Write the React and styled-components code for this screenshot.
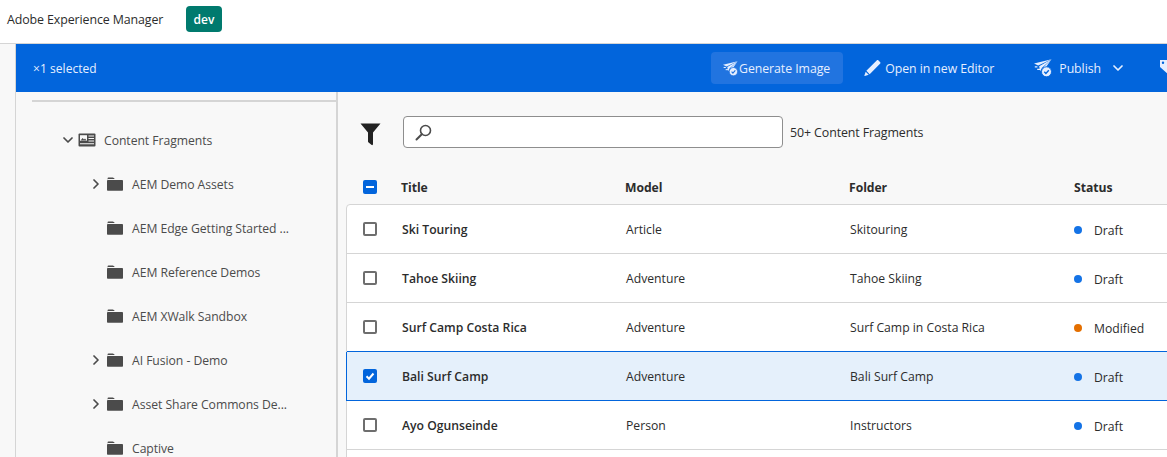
import React from 'react';
import styled, { createGlobalStyle } from 'styled-components';

const Global = createGlobalStyle`
  html, body { margin: 0; padding: 0; height: 100%; overflow: hidden; background: #f8f8f8; }
  body { font-family: "Open Sans", "Noto Sans", sans-serif; font-size: 12px; color: #2c2c2c; }
  #root { height: 100%; }
`;

const Page = styled.div`
  width: 1167px;
  height: 457px;
  overflow: hidden;
  display: flex;
  flex-direction: column;
`;

const TopBar = styled.header`
  flex: 0 0 44px;
  box-sizing: border-box;
  background: #fff;
  border-bottom: 1px solid #d5d5d5;
  display: flex;
  align-items: center;
  padding: 0 0 5px 7px;
`;

const Brand = styled.div`
  width: 179px;
  font-size: 12.4px;
  color: #2c2c2c;
  letter-spacing: -0.1px;
`;

const EnvBadge = styled.div`
  width: 36px;
  height: 26px;
  border-radius: 4px;
  background: #007a6e;
  color: #fff;
  font-size: 12px;
  font-weight: 600;
  display: flex;
  align-items: center;
  justify-content: center;
`;

const Shell = styled.div`
  flex: 1;
  min-height: 0;
  display: flex;
`;

const Rail = styled.div`
  flex: 0 0 16px;
  box-sizing: border-box;
  border-right: 1px solid #d5d5d5;
`;

const Workspace = styled.div`
  flex: 1;
  min-width: 0;
  display: flex;
  flex-direction: column;
`;

const ActionBar = styled.div`
  flex: 0 0 48px;
  background: #0265dc;
  color: #e6efff;
  display: flex;
  align-items: center;
  white-space: nowrap;
  overflow: hidden;
`;

const Selection = styled.div`
  width: 695px;
  flex: none;
  padding-left: 17px;
  box-sizing: border-box;
  font-size: 12px;
  letter-spacing: 0.05px;
`;

const Action = styled.div`
  flex: none;
  height: 32px;
  box-sizing: border-box;
  display: flex;
  align-items: center;
  gap: ${p => p.$gap || 4}px;
  border-radius: 4px;
  font-size: 12.3px;
  letter-spacing: -0.05px;
  margin-right: ${p => p.$after || 0}px;
  padding: 0 ${p => (p.$active ? 13 : 0)}px 0 ${p => (p.$active ? 12 : 0)}px;
  background: ${p => (p.$active ? '#2174e0' : 'transparent')};
`;

const Caret = styled.span`
  display: flex;
  margin-left: 5px;
`;

const Columns = styled.div`
  flex: 1;
  min-height: 0;
  display: flex;
`;

const Sidebar = styled.aside`
  flex: 0 0 322px;
  box-sizing: border-box;
  border-right: 2px solid #d5d5d5;
  padding: 8px 0 0 16px;
  overflow: hidden;
`;

const SideRule = styled.div`
  height: 2px;
  background: #d5d5d5;
  margin-bottom: 16px;
`;

const TreeRow = styled.div`
  height: 44px;
  display: flex;
  align-items: center;
  padding-left: ${p => (p.$root ? 29 : 57)}px;
  color: #4b4b4b;
  font-size: 12.2px;
  letter-spacing: -0.05px;
  white-space: nowrap;
`;

const Twisty = styled.div`
  flex: 0 0 13px;
  margin-right: ${p => (p.$root ? 4 : 5)}px;
  display: flex;
  align-items: center;
  justify-content: center;
`;

const NodeLabel = styled.span`
  margin-left: ${p => (p.$root ? 8 : 9)}px;
`;

const Main = styled.main`
  flex: 1;
  min-width: 0;
  padding: 24px 0 0 8px;
  overflow: hidden;
`;

const SearchRow = styled.div`
  display: flex;
  align-items: center;
  height: 32px;
  padding-left: 14px;
`;

const FilterSlot = styled.div`
  flex: 0 0 43px;
  display: flex;
  padding-top: 4px;
`;

const SearchBox = styled.div`
  width: 380px;
  height: 32px;
  box-sizing: border-box;
  background: #fff;
  border: 1px solid #8e8e8e;
  border-radius: 4px;
  display: flex;
  align-items: center;
  padding-left: 11px;
`;

const Count = styled.div`
  margin-left: 7px;
  font-size: 12.4px;
  letter-spacing: -0.1px;
  color: #2c2c2c;
`;

const Grid = styled.div`
  display: grid;
  grid-template-columns: 55px 224px 224px 225px 224px;
  align-items: center;
`;

const HeadRow = styled(Grid)`
  margin-top: 22px;
  height: 34px;
  font-weight: 700;
  font-size: 12.2px;
  letter-spacing: -0.05px;
  color: #2c2c2c;
  box-sizing: border-box;
`;

const Table = styled.div`
  width: 900px;
  height: 300px;
  background: #fff;
  border: 1px solid #d5d5d5;
  border-radius: 4px 0 0 0;
`;

const Row = styled(Grid)`
  height: 49px;
  box-sizing: border-box;
  border-bottom: 1px solid ${p => (p.$selected ? '#0265dc' : '#d5d5d5')};
  background: ${p => (p.$selected ? '#e5f0fb' : 'transparent')};
  box-shadow: ${p => (p.$selected ? '0 -1px 0 #0265dc, -1px 0 0 #0265dc' : 'none')};
  font-size: 12.2px;
  color: #2c2c2c;
`;

const TitleCell = styled.div`
  font-weight: 600;
`;

const Cell = styled.div``;

const BoxCell = styled.div`
  padding-left: ${p => (p.$head ? 17 : 16)}px;
  display: flex;
`;

const Check = styled.div`
  width: 14px;
  height: 14px;
  box-sizing: border-box;
  border-radius: 2px;
  border: ${p => (p.$on ? 'none' : '2px solid #6e6e6e')};
  background: ${p => (p.$on ? '#0265dc' : '#fff')};
  display: flex;
  align-items: center;
  justify-content: center;
`;

const StatusCell = styled.div`
  display: flex;
  align-items: center;
  padding-top: 2px;
  margin-left: -1px;
`;

const Dot = styled.span`
  width: 8px;
  height: 8px;
  border-radius: 50%;
  background: ${p => (p.$modified ? '#e46f00' : '#1473e6')};
  margin-right: 12px;
`;

const Chevron = ({ open, color = '#4b4b4b' }) => (
  <svg width="10" height="10" viewBox="0 0 10 10" fill="none" stroke={color} strokeWidth="1.7" strokeLinecap="round" strokeLinejoin="round">
    {open ? <path d="M1 3l4 4 4-4" /> : <path d="M3 1l4 4-4 4" />}
  </svg>
);

const FolderIcon = () => (
  <svg width="16" height="14" viewBox="0 0 16 14" fill="#4b4b4b">
    <path d="M.6 2.600V1.200C.6.700.9.400 1.400.400h4.400c.4 0 .7.200 1 .5l1 1.200H1.200c-.2 0-.4.200-.6.500z" />
    <rect x="0" y="3" width="16" height="10.800" rx="0.800" />
  </svg>
);

const FragmentIcon = () => (
  <svg width="18" height="14" viewBox="0 0 18 14">
    <rect x="0.500" y="0.500" width="17" height="13" rx="1" fill="#4b4b4b" />
    <rect x="2" y="2.200" width="7" height="5.600" fill="#f8f8f8" />
    <path d="M2.600 7.400l2-2.400 1.400 1.500 1-1 1.600 1.900z" fill="#4b4b4b" />
    <path d="M10.500 3h5.500M10.500 5.500h5.500M10.500 8h5.500M2 10.800h14" stroke="#f8f8f8" strokeWidth="1.100" />
  </svg>
);

const FilterIcon = () => (
  <svg width="21" height="23" viewBox="0 0 21 23" fill="#222">
    <path d="M.5.600h20L13 9.600V21c0 .8-.7 1.400-1.300 1L8.600 19.600c-.4-.3-.6-.7-.6-1.100V9.600z" />
  </svg>
);

const SearchIcon = () => (
  <svg width="17" height="17" viewBox="0 0 17 17" fill="none" stroke="#4b4b4b">
    <circle cx="10.500" cy="6.500" r="5" strokeWidth="1.600" />
    <path d="M6.800 10.200L1.500 15.500" strokeWidth="2" strokeLinecap="round" />
  </svg>
);

const PublishIcon = ({ size = 18, bg = '#0265dc' }) => (
  <svg width={size} height={size} viewBox="0 0 18 18" fill="#e6efff">
    <path d="M17.500.3L0 4.500l4.200 2.100L17.500.3z" />
    <path d="M17.500.3L5.200 7.300l.9 4.900 1.900-3.400L17.500.3z" />
    <path d="M17.500.3L9.200 8.400l2.500.2L17.500.3z" />
    <path d="M.8 7.800h2.600M3.200 10.400h3.600" stroke="#e6efff" strokeWidth="1.200" />
    <circle cx="12.500" cy="12.800" r="5" stroke={bg} strokeWidth="0.900" />
    <path d="M10.300 12.800l1.600 1.700 2.900-3.200" fill="none" stroke={bg} strokeWidth="1.400" />
  </svg>
);

const PencilIcon = () => (
  <svg width="17" height="18" viewBox="0 0 18 18" fill="#e6efff">
    <path d="M13.700.8c.4-.4 1-.4 1.400 0l2.100 2.100c.4.4.4 1 0 1.400L6 15.500 2.500 12 13.700.8z" />
    <path d="M1.800 13l3.200 3.200-4.100 1.300c-.3.100-.6-.2-.5-.5L1.800 13z" />
  </svg>
);

const TagIcon = () => (
  <svg width="20" height="20" viewBox="0 0 20 20" fill="#e6efff">
    <path d="M0 2h8l10 10-7 7L0 9V2zm3 1.500a1.200 1.200 0 100 2.400 1.200 1.200 0 000-2.400z" fillRule="evenodd" />
  </svg>
);

const tree = [
  { label: 'AEM Demo Assets', more: true },
  { label: 'AEM Edge Getting Started ...' },
  { label: 'AEM Reference Demos' },
  { label: 'AEM XWalk Sandbox' },
  { label: 'AI Fusion - Demo', more: true },
  { label: 'Asset Share Commons De...', more: true },
  { label: 'Captive' },
];

const rows = [
  { title: 'Ski Touring', model: 'Article', folder: 'Skitouring', status: 'Draft' },
  { title: 'Tahoe Skiing', model: 'Adventure', folder: 'Tahoe Skiing', status: 'Draft' },
  { title: 'Surf Camp Costa Rica', model: 'Adventure', folder: 'Surf Camp in Costa Rica', status: 'Modified' },
  { title: 'Bali Surf Camp', model: 'Adventure', folder: 'Bali Surf Camp', status: 'Draft', selected: true },
  { title: 'Ayo Ogunseinde', model: 'Person', folder: 'Instructors', status: 'Draft' },
];

export default function App() {
  return (
    <Page>
      <Global />
      <TopBar>
        <Brand>Adobe Experience Manager</Brand>
        <EnvBadge>dev</EnvBadge>
      </TopBar>
      <Shell>
        <Rail />
        <Workspace>
          <ActionBar>
            <Selection>×1 selected</Selection>
            <Action $active $gap={1} $after={21}><PublishIcon size={15} bg="#2174e0" />Generate Image</Action>
            <Action $after={40}><PencilIcon />Open in new Editor</Action>
            <Action $gap={7} $after={37}><PublishIcon />Publish<Caret><Chevron open color="#e6efff" /></Caret></Action>
            <Action><TagIcon /></Action>
          </ActionBar>
          <Columns>
            <Sidebar>
              <SideRule />
              <TreeRow $root>
                <Twisty $root><Chevron open /></Twisty>
                <FragmentIcon />
                <NodeLabel $root>Content Fragments</NodeLabel>
              </TreeRow>
              {tree.map(node => (
                <TreeRow key={node.label}>
                  <Twisty>{node.more && <Chevron />}</Twisty>
                  <FolderIcon />
                  <NodeLabel>{node.label}</NodeLabel>
                </TreeRow>
              ))}
            </Sidebar>
            <Main>
              <SearchRow>
                <FilterSlot><FilterIcon /></FilterSlot>
                <SearchBox><SearchIcon /></SearchBox>
                <Count>50+ Content Fragments</Count>
              </SearchRow>
              <HeadRow>
                <BoxCell $head>
                  <Check $on>
                    <svg width="10" height="10" viewBox="0 0 10 10"><path d="M1 5h8" stroke="#fff" strokeWidth="2" /></svg>
                  </Check>
                </BoxCell>
                <div>Title</div>
                <div>Model</div>
                <div>Folder</div>
                <div>Status</div>
              </HeadRow>
              <Table>
                {rows.map(row => (
                  <Row key={row.title} $selected={row.selected}>
                    <BoxCell>
                      <Check $on={row.selected}>
                        {row.selected && (
                          <svg width="10" height="10" viewBox="0 0 10 10" fill="none"><path d="M1.500 5.200l2.500 2.500 4.500-5.200" stroke="#fff" strokeWidth="2" /></svg>
                        )}
                      </Check>
                    </BoxCell>
                    <TitleCell>{row.title}</TitleCell>
                    <Cell>{row.model}</Cell>
                    <Cell>{row.folder}</Cell>
                    <StatusCell><Dot $modified={row.status === 'Modified'} />{row.status}</StatusCell>
                  </Row>
                ))}
              </Table>
            </Main>
          </Columns>
        </Workspace>
      </Shell>
    </Page>
  );
}
